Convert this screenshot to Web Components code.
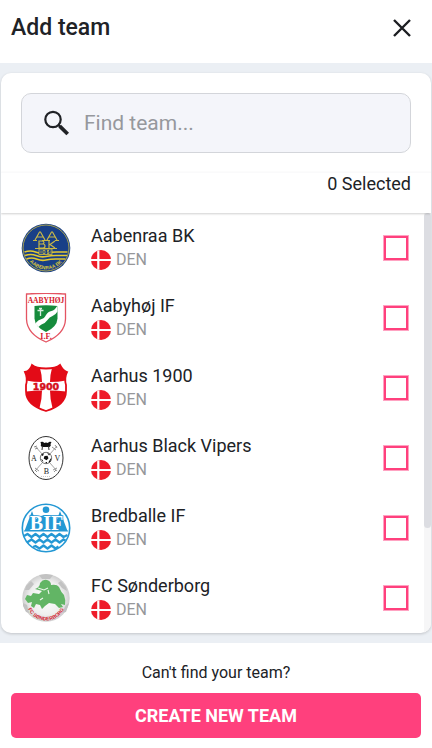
<!DOCTYPE html>
<html lang="en">
<head>
<meta charset="utf-8">
<meta name="viewport" content="width=device-width, initial-scale=1">
<title>Add team</title>
<style>
  html, body { margin: 0; min-height: 100%; }
  body { font-family: Roboto, "Liberation Sans", sans-serif; color: #202226; background: #fff; }
</style>
</head>
<body>
<add-team-page></add-team-page>

<template id="page">
  <style>
    :host { display: flex; flex-direction: column; min-height: 100vh; }
    main { flex: 1; display: flex; background: #ebeff4; padding: 10px 1px; }
    team-panel { flex: 1; min-width: 0; }
  </style>
  <dialog-header>Add team</dialog-header>
  <main>
    <team-panel>
      <search-field slot="search"></search-field>
      <span slot="count">0 Selected</span>
      <team-row crest="aabenraa">Aabenraa BK</team-row>
      <team-row crest="aabyhoj">Aabyhøj IF</team-row>
      <team-row crest="aarhus">Aarhus 1900</team-row>
      <team-row crest="vipers">Aarhus Black Vipers</team-row>
      <team-row crest="bredballe">Bredballe IF</team-row>
      <team-row crest="sonderborg">FC Sønderborg</team-row>
    </team-panel>
  </main>
  <dialog-footer>Can't find your team?</dialog-footer>
</template>

<template id="header">
  <style>
    :host { display: flex; align-items: center; justify-content: space-between; height: 63px; padding: 0 20px 7px 11px; box-sizing: border-box; background: #fff; }
    h1 { margin: 0; font-size: 23px; line-height: 30px; font-weight: 500; }
    button { display: block; border: 0; padding: 0; background: none; color: #1c1e22; cursor: pointer; }
    svg { display: block; width: 20px; height: 20px; }
  </style>
  <h1><slot></slot></h1>
  <button type="button" aria-label="Close"><svg viewBox="0 0 20 20" fill="none" stroke="currentColor" stroke-width="2.4"><path d="M2 2 18 18M18 2 2 18"/></svg></button>
</template>

<template id="search">
  <style>
    :host { display: block; }
    label { display: flex; align-items: center; gap: 14px; height: 60px; box-sizing: border-box; padding: 0 20px; border: 1px solid #d3d5da; border-radius: 10px; background: #f4f5fa; }
    svg { flex: none; width: 28px; height: 28px; color: #202226; }
    input { flex: 1; min-width: 0; border: 0; padding: 0; outline: 0; background: none; font: inherit; font-size: 21px; line-height: 28px; color: #202226; }
    input::placeholder { color: #96989d; opacity: 1; }
  </style>
  <label>
    <svg viewBox="0 0 28 28" fill="none" stroke="currentColor" aria-hidden="true"><circle cx="11" cy="10.5" r="7.700" stroke-width="2.2"/><path d="m16.5 16 2 2" stroke-width="2.4"/><path d="m17.7 17.2 8 7.8" stroke-width="3.8"/></svg>
    <input type="text" placeholder="Find team..." aria-label="Find team">
  </label>
</template>

<template id="panel">
  <style>
    :host { display: flex; flex-direction: column; background: #fff; border-radius: 10px; overflow: hidden; box-shadow: 0 1px 3px #0000002e; }
    .search { padding: 20px 20px 19px; }
    .count { display: flex; justify-content: flex-end; position: relative; box-sizing: border-box; height: 41px; padding: 0 20px; border-top: 1px solid #fafafb; background: #fff; font-size: 18px; line-height: 22px; box-shadow: 0 1px 2px #00000030; }
    .body { flex: 1; display: flex; }
    .list { flex: 1; min-width: 0; }
    .track { width: 7px; background: #f6f6f7; }
    .thumb { height: 75%; border-radius: 4px; background: #dcdde2; }
  </style>
  <div class="search"><slot name="search"></slot></div>
  <div class="count"><slot name="count"></slot></div>
  <div class="body">
    <div class="list" role="list"><slot></slot></div>
    <div class="track" aria-hidden="true"><div class="thumb"></div></div>
  </div>
</template>

<template id="row">
  <style>
    :host { display: block; }
    label { display: flex; align-items: center; height: 70px; box-sizing: border-box; padding: 0 15px 0 20px; cursor: pointer; }
    team-crest { margin-right: 20px; }
    .text { flex: 1; min-width: 0; }
    .name { display: block; font-size: 18px; line-height: 24px; }
    .country { display: flex; align-items: center; gap: 5px; height: 24px; font-size: 16px; line-height: 20px; color: #96979a; }
    .flag { width: 20px; height: 20px; }
    input { appearance: none; flex: none; width: 26px; height: 26px; margin: 0; border: 1px solid #ffa3c2; background: #fff; box-shadow: inset 0 0 0 2px #ff407d; }
    input:checked { background: #ff407d; }
  </style>
  <label>
    <team-crest></team-crest>
    <span class="text">
      <span class="name"><slot></slot></span>
      <span class="country">
        <svg class="flag" viewBox="0 0 20 20" aria-hidden="true"><circle cx="10" cy="10" r="10" fill="#ee1c2a"/><path d="M7.3.4v19.2M0 10h20" stroke="#fff" stroke-width="2.2"/></svg>
        <span>DEN</span>
      </span>
    </span>
    <input type="checkbox">
  </label>
</template>

<template id="footer">
  <style>
    :host { display: flex; flex-direction: column; box-sizing: border-box; padding: 20px 11px 10px; background: #fff; text-align: center; }
    p { margin: 0 0 10px; font-size: 16px; line-height: 20px; }
    button { height: 45px; border: 0; border-radius: 5px; background: #ff407d; color: #fff; font: inherit; font-size: 18px; font-weight: 700; line-height: 24px; cursor: pointer; }
  </style>
  <p><slot></slot></p>
  <button type="button">CREATE NEW TEAM</button>
</template>

<script>
const clone = id => document.getElementById(id).content.cloneNode(true);
const define = (name, id) => customElements.define(name, class extends HTMLElement {
  constructor() { super(); this.attachShadow({ mode: 'open' }).append(clone(id)); }
});

const crests = {
  aabenraa: `
    <circle cx="25" cy="25" r="24.3" fill="#183f87"/>
    <circle cx="25" cy="25" r="23" fill="none" stroke="#cdbb43" stroke-width=".8"/>
    <g fill="none" stroke="#c8b747" stroke-width="1.2">
      <path d="m14 17 4.500-8h1l4.500 8m-8-3h6M26 17l4.500-8h1l4.500 8m-8-3h6M12 17.500h4m5 0h8m5 0h4"/>
      <path d="M18 18v7h4q2 0 2-2t-2-2h-4 3q2 0 2-1.500T21 18zM28 18v7m6-7-5 3.500 5 3.500M14 25.500h22"/>
    </g>
    <path d="M3.500 29q6-2 11 0t10.500 1 10.500-1 11 0M4 32.500q6-2 11 0t10 1 10-1 11 0M5.500 36q5-2 10 0t9.500 1 9.500-1 10 0" fill="none" stroke="#e5ca2f" stroke-width="1.700"/>
    <rect x="18" y="26" width="13" height="5.500" fill="#183f87" stroke="#d5c03a" stroke-width=".8"/>
    <path d="M20 27.500v3m2-3h2v3h-2zm4 0h2l-2 1.500h2v1.500h-2m4-3v3" fill="none" stroke="#dcc63b" stroke-width=".7"/>
    <path id="arc1" d="M7 36.500a21.300 21.300 0 0 0 36 0" fill="none"/>
    <text text-anchor="middle" font-family="Liberation Sans, sans-serif" font-weight="700" font-size="5" fill="#dcc63b"><textPath href="#arc1" startOffset="50%">AABENRAA BK</textPath></text>`,
  aabyhoj: `
    <path d="M5.500 1q19.500-1.500 39 0v25Q44 41 25 49 6 41 5.500 26z" fill="#fff" stroke="#e45462" stroke-width="1.3"/>
    <path d="M13.500 13q11.500-1.500 23 0v12.500Q36 34 25 39 14 34 13.500 25.500z" fill="#168b3c"/>
    <path d="M14.500 31q1-3 5-4.500 4-1 5.500-4.500 2-3.500 5.500-4 3-.5 6-5.500v6q-2 3.500-5 4.500-3 1-5 4t-6 4.500q-2 1-3 2.500z" fill="#fff"/>
    <path d="M19.500 15v8m-3-5.500h6m-4.500-2 3 0" fill="none" stroke="#d7edde" stroke-width="1.300"/>
    <text x="25" y="10" text-anchor="middle" font-family="Liberation Serif, serif" font-weight="700" font-size="7.500" fill="#d6162a">AABYHØJ</text>
    <text x="25" y="45.500" text-anchor="middle" font-family="Liberation Serif, serif" font-weight="700" font-size="8" fill="#d6162a">I.F.</text>`,
  aarhus: `
    <path d="M11 2q4 3.500 14 3.500T39 2q3 6 7 7-3 6-1 13v6Q45 42 25 48 5 42 5 28v-6Q7 15 4 9q5-1 7-7z" fill="#e30b17"/>
    <path d="M19 5q6 1 12 0-2 7-2 14 8 0 16-1.500v11q-8-1-16-1 0 9 2.500 17.500L25 48l-6.500-3Q21 36.500 21 27.500q-8 0-16 1v-11Q13 19 21 19q0-7-2-14z" fill="#fff"/>
    <path d="M11 2q4 3.500 14 3.500T39 2q3 6 7 7-3 6-1 13v6Q45 42 25 48 5 42 5 28v-6Q7 15 4 9q5-1 7-7z" fill="none" stroke="#e30b17" stroke-width="1.800"/>
    <text x="25" y="26.500" text-anchor="middle" font-family="DejaVu Sans, sans-serif" font-weight="700" font-size="9.500" fill="#d50e19" stroke="#d50e19" stroke-width=".5">1900</text>`,
  vipers: `
    <ellipse cx="25" cy="25" rx="17" ry="21.500" fill="#fff" stroke="#333" stroke-width="1"/>
    <path d="m14 13 22 25M36 13 14 38" stroke="#999" stroke-width=".9"/>
    <path d="m13 14 3-1m-2 3 3-1m17-3 2 3m-5-1 4 3M14 35l4 3m14-1 4-2m-22 2 2 2m17 0 2-2" stroke="#777" stroke-width=".8"/>
    <circle cx="25" cy="25" r="5.700" fill="#fff" stroke="#555" stroke-width=".8"/>
    <path d="m23.500 23 3-.3 1 2.500-2 2-2.800-1.700zM20 22l3-2-1 3zm6-2.500 3 2-1 1zM19.800 26l2 1 .5 2zm9.500 0 1-1-1 4-2 .5zM24 29l2 0v1.500z" fill="#111"/>
    <path d="M19.500 9q3-1 3.500 1 2-1 4 0 1-2 3.500-1l-1 2q1 2-1 3H21q-2-1-1-3z" fill="#111"/>
    <path d="m21.500 13-.5 4m6.500-4 .5 4" stroke="#333" stroke-width="1"/>
    <g font-family="Liberation Serif, serif" font-size="8" text-anchor="middle" fill="#222"><text x="13" y="27.500">A</text><text x="36.500" y="27.500">V</text><text x="25.500" y="41">B</text></g>
    <path d="M20 43.500h10" stroke="#bbb" stroke-width=".8" stroke-dasharray="1"/>`,
  bredballe: `
    <circle cx="25" cy="25" r="23.700" fill="#fff" stroke="#2498d4" stroke-width="1.600"/>
    <circle cx="25" cy="6.800" r="3.300" fill="#2498d4"/>
    <path d="M3.500 28 11 8l7 20zM32 28l7-20 7.500 20z" fill="#2498d4"/>
    <path d="M15 28V16q10-8 20 0v12z" fill="#2498d4"/>
    <text x="25.500" y="26.500" text-anchor="middle" font-family="Liberation Serif, serif" font-weight="700" font-size="20" fill="#fff" stroke="#2498d4" stroke-width="1.600" paint-order="stroke">BIF</text>
    <path d="M3 28h44" stroke="#2498d4" stroke-width="1.200"/>
    <path d="m3 33 3.500-2 4 3 4-3 4 3 4-3 4 3 4-3 4 3 4-3 4 3 4-2M6 39.500l4.500-3 4 3 4-3 4 3 4-3 4 3 4-3 4 3 4-3 2 1M12 44l2.500-1 4 2.500 4-3 4 3 4-3 4 3 3-2" fill="none" stroke="#2498d4" stroke-width="2.300" stroke-linejoin="round"/>`,
  sonderborg: `
    <defs><radialGradient id="ball"><stop offset="0" stop-color="#fff"/><stop offset=".7" stop-color="#efefef"/><stop offset="1" stop-color="#cfcfcf"/></radialGradient></defs>
    <circle cx="25" cy="25" r="23.700" fill="url(#ball)"/>
    <path d="m18 2 7-1 7 1-3 4h-8zM5 13l5-5 3 3-5 6-4 0zm35-5 5 6 1 4-5-3-4-5zM2 30l4 2 2 8-3-1-3-6zm43 2 3-2-3 9-4 1z" fill="#c2c2c2"/>
    <path d="M14 16q5-2 5-6 3-4 7-3 4 1 4 5 6-1 8 2 2 5 5 8 2 5 1 10l-4-1 2 3-4 1-4-4-6-1-4 3-3 3-2-4-4-1-2 4-3-2 1-4-4 1-3-4 2-4 4 1 2-3 6 1 3-3z" fill="#62b565"/>
    <path d="m17 15 6 2 4-2M27 17l1 4m-6 4-3 2" fill="none" stroke="#edf5ed" stroke-width="1.100"/>
    <path id="arc" d="M6.500 35a20 20 0 0 0 37 0" fill="none"/>
    <text text-anchor="middle" font-family="Liberation Sans, sans-serif" font-weight="700" font-size="5" fill="#d4202e"><textPath href="#arc" startOffset="50%">FC SØNDERBORG</textPath></text>`
};

customElements.define('team-crest', class extends HTMLElement {
  static observedAttributes = ['name'];
  constructor() { super(); this.attachShadow({ mode: 'open' }); }
  attributeChangedCallback(_, __, name) {
    this.shadowRoot.innerHTML = `<style>:host{display:block;flex:none;width:50px;height:50px}svg{display:block;width:100%;height:100%}</style>
      <svg viewBox="0 0 50 50" aria-hidden="true">${crests[name] || ''}</svg>`;
  }
});
customElements.define('team-row', class extends HTMLElement {
  constructor() { super(); this.attachShadow({ mode: 'open' }).append(clone('row')); }
  connectedCallback() {
    this.setAttribute('role', 'listitem');
    this.shadowRoot.querySelector('team-crest').setAttribute('name', this.getAttribute('crest'));
    this.shadowRoot.querySelector('input').setAttribute('aria-label', this.textContent);
  }
});
define('dialog-header', 'header');
define('search-field', 'search');
define('team-panel', 'panel');
define('dialog-footer', 'footer');
define('add-team-page', 'page');
</script>
</body>
</html>
